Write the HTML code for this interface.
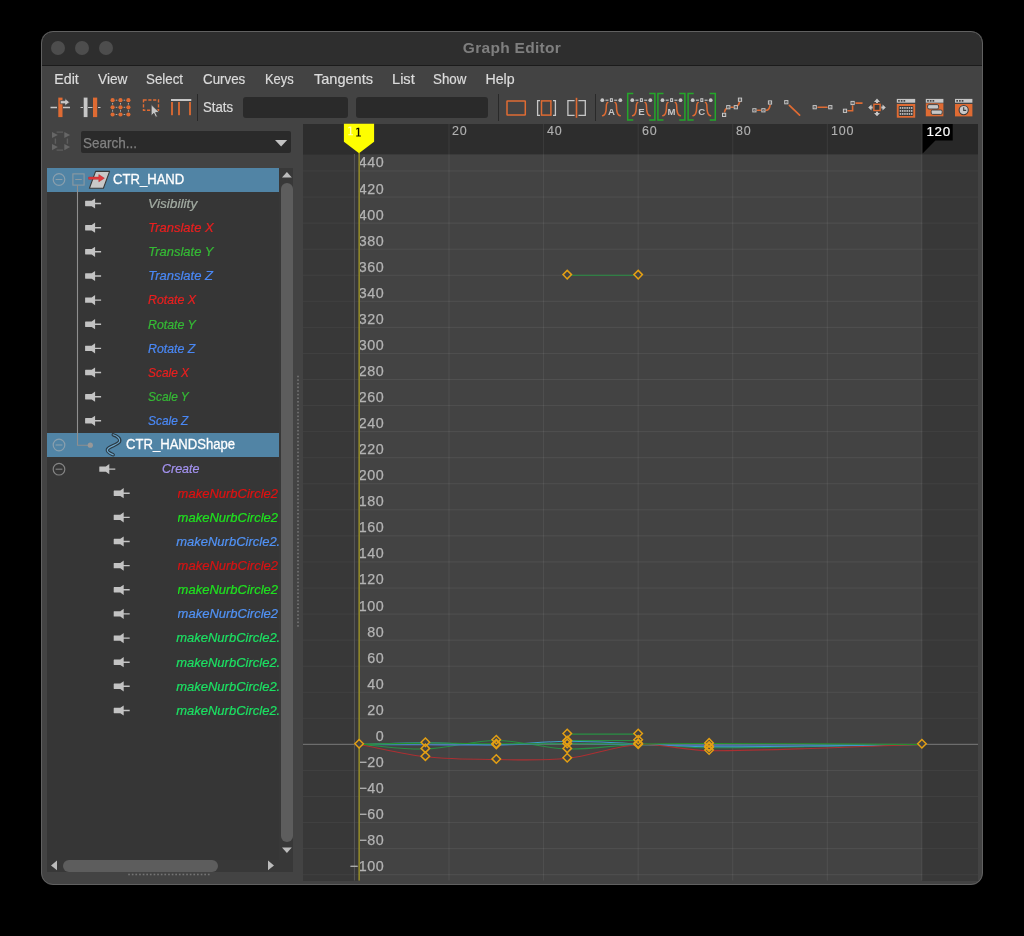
<!DOCTYPE html><html><head><meta charset="utf-8"><title>Graph Editor</title><style>

html,body{margin:0;padding:0;background:#000;}
body{width:1024px;height:936px;position:relative;overflow:hidden;font-family:"Liberation Sans",sans-serif;}
.a{position:absolute;}
#win{will-change:transform;opacity:.9999;position:absolute;left:41px;top:31px;width:942px;height:854px;background:#444;border-radius:12px;overflow:hidden;}
#rim{position:absolute;left:0;top:0;width:940px;height:852px;border:1px solid #626262;border-radius:12px;pointer-events:none;}
#tb{position:absolute;left:0;top:0;width:942px;height:34px;background:#2f2f2f;border-bottom:1px solid #1c1c1c;}
.tl{position:absolute;top:10px;width:14px;height:14px;border-radius:7px;background:#4e4e4e;}
#title{position:absolute;left:0;top:0;width:942px;height:34px;line-height:33px;text-align:center;color:#808080;font-weight:bold;font-size:15.5px;letter-spacing:.3px;}
.mi{position:absolute;top:38px;height:20px;line-height:20px;color:#dcdcdc;font-size:14.2px;white-space:nowrap;transform:scaleX(.94);transform-origin:0 50%;-webkit-text-stroke:.2px #dcdcdc;}
.fld{position:absolute;background:#2b2b2b;border-radius:2px;}
.sep{position:absolute;width:1px;background:#2a2a2a;}
svg{position:absolute;left:0;top:0;overflow:visible}
.row{position:absolute;left:6px;width:232px;height:24px;}
.rt{position:absolute;white-space:nowrap;font-style:italic;font-size:13px;-webkit-text-stroke:.22px currentColor;line-height:24px;height:24px;}
.nt{position:absolute;white-space:nowrap;font-size:14.6px;transform:scaleX(.897);transform-origin:0 50%;-webkit-text-stroke:.3px #fff;line-height:24px;height:24px;color:#fff;}

</style></head><body>
<div id="win">
<div id="tb"></div>
<div class="tl" style="left:10px"></div>
<div class="tl" style="left:34px"></div>
<div class="tl" style="left:58px"></div>
<div id="title">Graph Editor</div>
<div class="mi" style="left:13.3px;transform:scaleX(1.0)">Edit</div>
<div class="mi" style="left:56.6px;transform:scaleX(0.965)">View</div>
<div class="mi" style="left:105.0px;transform:scaleX(0.94)">Select</div>
<div class="mi" style="left:162.0px;transform:scaleX(0.94)">Curves</div>
<div class="mi" style="left:224.4px;transform:scaleX(0.91)">Keys</div>
<div class="mi" style="left:272.6px;transform:scaleX(1.025)">Tangents</div>
<div class="mi" style="left:351.0px;transform:scaleX(1.03)">List</div>
<div class="mi" style="left:392.0px;transform:scaleX(0.94)">Show</div>
<div class="mi" style="left:444.4px;transform:scaleX(1.0)">Help</div>
<div class="mi" style="left:162px;top:66px;font-size:14px">Stats</div>
<div class="fld" style="left:201.5px;top:66px;width:105.5px;height:20.5px;border-radius:3px"></div>
<div class="fld" style="left:315px;top:66px;width:132px;height:20.5px;border-radius:3px"></div>
<div class="sep" style="left:156px;top:63px;height:27px"></div>
<div class="sep" style="left:457px;top:63px;height:27px"></div>
<div class="sep" style="left:554px;top:63px;height:27px"></div>
<svg width="942" height="854" viewBox="41 31 942 854"><path d="M50.5 107.5H57M63 107.5H70" stroke="#c8c8c8" stroke-width="1.4"/><rect x="58.3" y="97.6" width="4.2" height="19.5" fill="#e06c34"/><path d="M60.3 100.6h4.7v-2l4.6 3.6-4.6 3.6v-2h-4.7z" fill="#c8c8c8" stroke="#4a4a4a" stroke-width=".8"/><path d="M80.5 107.5H83M88 107.5H92.5M98 107.5H100.5" stroke="#c8c8c8" stroke-width="1.2"/><rect x="83.7" y="97.6" width="3.8" height="19.5" fill="#c8c8c8"/><rect x="93" y="97.6" width="4.2" height="19.5" fill="#e06c34"/><circle cx="112.6" cy="100.2" r="2.1" fill="#e06c34"/><circle cx="120.5" cy="100.2" r="2.1" fill="#e06c34"/><circle cx="128.4" cy="100.2" r="2.1" fill="#e06c34"/><circle cx="112.6" cy="107.3" r="2.1" fill="#e06c34"/><circle cx="120.5" cy="107.3" r="2.1" fill="#e06c34"/><circle cx="128.4" cy="107.3" r="2.1" fill="#e06c34"/><circle cx="112.6" cy="114.5" r="2.1" fill="#e06c34"/><circle cx="120.5" cy="114.5" r="2.1" fill="#e06c34"/><circle cx="128.4" cy="114.5" r="2.1" fill="#e06c34"/><rect x="115.7" y="99.7" width="1.6" height="1" fill="#aaa"/><rect x="123.60000000000001" y="99.7" width="1.6" height="1" fill="#aaa"/><rect x="115.7" y="106.8" width="1.6" height="1" fill="#aaa"/><rect x="123.60000000000001" y="106.8" width="1.6" height="1" fill="#aaa"/><rect x="115.7" y="114.0" width="1.6" height="1" fill="#aaa"/><rect x="123.60000000000001" y="114.0" width="1.6" height="1" fill="#aaa"/><rect x="112.1" y="103.0" width="1" height="1.6" fill="#aaa"/><rect x="112.1" y="110.10000000000001" width="1" height="1.6" fill="#aaa"/><rect x="120.0" y="103.0" width="1" height="1.6" fill="#aaa"/><rect x="120.0" y="110.10000000000001" width="1" height="1.6" fill="#aaa"/><rect x="127.9" y="103.0" width="1" height="1.6" fill="#aaa"/><rect x="127.9" y="110.10000000000001" width="1" height="1.6" fill="#aaa"/><rect x="143.5" y="100" width="15" height="10.3" fill="none" stroke="#e06c34" stroke-width="1.4" stroke-dasharray="3.2 1.6"/><path d="M151.2 104.6v11.2l2.7-2.5 1.8 3.9 1.7-.8-1.8-3.8 3.6-.3z" fill="#c8c8c8" stroke="#444" stroke-width=".8"/><rect x="171" y="99" width="20.3" height="2" fill="#c8c8c8"/><rect x="171.1" y="102" width="1.8" height="13.2" fill="#e06c34"/><rect x="178.1" y="102" width="1.8" height="13.2" fill="#e06c34"/><rect x="189.1" y="102" width="1.8" height="13.2" fill="#e06c34"/></svg>
<svg width="942" height="854" viewBox="41 31 942 854"><rect x="507" y="100.9" width="18.3" height="14.2" rx=".4" fill="none" stroke="#e06c34" stroke-width="1.5"/><path d="M540 100.7H537.6V115.3H540M553 100.7H555.4V115.3H553" fill="none" stroke="#c8c8c8" stroke-width="1.3"/><rect x="541.5" y="100.9" width="9.4" height="14.2" fill="none" stroke="#e06c34" stroke-width="1.5"/><path d="M574.6 100.7H567.9V115.3H574.6M578.4 100.7H585.3V115.3H578.4" fill="none" stroke="#c8c8c8" stroke-width="1.3"/><rect x="575.7" y="97.8" width="1.6" height="20" fill="#e06c34"/><rect x="605.5" y="99.6" width="3" height="1.3" fill="#b4b4b4"/><rect x="614.2" y="99.6" width="3" height="1.3" fill="#b4b4b4"/><circle cx="602.3" cy="100.2" r="1.9" fill="#c8c8c8"/><circle cx="620.3" cy="100.2" r="1.9" fill="#c8c8c8"/><rect x="610.4" y="98.7" width="2" height="2.8" fill="#555" stroke="#c8c8c8" stroke-width="1"/><path d="M602.6 115.7C604.7 115.3 605.6 113.4 606.0 110.6S606.2 105.6 606.5 104.4S607.0 102.7 607.8 102.4" fill="none" stroke="#e06c34" stroke-width="1.5" stroke-linecap="round"/><path d="M620.2 115.7C618.1 115.3 617.2 113.4 616.8 110.6S616.6 105.6 616.3 104.4S615.8 102.7 615.0 102.4" fill="none" stroke="#e06c34" stroke-width="1.5" stroke-linecap="round"/><text x="611.4" y="115.4" text-anchor="middle" font-family="Liberation Sans,sans-serif" font-weight="bold" font-size="9.6" fill="#c8c8c8">A</text><rect x="635.5" y="99.6" width="3" height="1.3" fill="#b4b4b4"/><rect x="644.2" y="99.6" width="3" height="1.3" fill="#b4b4b4"/><circle cx="632.3" cy="100.2" r="1.9" fill="#c8c8c8"/><circle cx="650.3" cy="100.2" r="1.9" fill="#c8c8c8"/><rect x="640.4" y="98.7" width="2" height="2.8" fill="#555" stroke="#c8c8c8" stroke-width="1"/><path d="M632.6 115.7C634.7 115.3 635.6 113.4 636.0 110.6S636.2 105.6 636.5 104.4S637.0 102.7 637.8 102.4" fill="none" stroke="#e06c34" stroke-width="1.5" stroke-linecap="round"/><path d="M650.2 115.7C648.1 115.3 647.2 113.4 646.8 110.6S646.6 105.6 646.3 104.4S645.8 102.7 645.0 102.4" fill="none" stroke="#e06c34" stroke-width="1.5" stroke-linecap="round"/><text x="641.4" y="115.4" text-anchor="middle" font-family="Liberation Sans,sans-serif" font-weight="bold" font-size="9.6" fill="#c8c8c8">E</text><path d="M633.3 93.5H627.7V120.1H633.3M649.3000000000001 93.5H654.9V120.1H649.3000000000001" fill="none" stroke="#25a82b" stroke-width="1.5"/><rect x="665.7" y="99.6" width="3" height="1.3" fill="#b4b4b4"/><rect x="674.4" y="99.6" width="3" height="1.3" fill="#b4b4b4"/><circle cx="662.5" cy="100.2" r="1.9" fill="#c8c8c8"/><circle cx="680.5" cy="100.2" r="1.9" fill="#c8c8c8"/><rect x="670.6" y="98.7" width="2" height="2.8" fill="#555" stroke="#c8c8c8" stroke-width="1"/><path d="M662.8 115.7C664.9 115.3 665.8 113.4 666.2 110.6S666.4 105.6 666.7 104.4S667.2 102.7 668.0 102.4" fill="none" stroke="#e06c34" stroke-width="1.5" stroke-linecap="round"/><path d="M680.4 115.7C678.3 115.3 677.4 113.4 677.0 110.6S676.8 105.6 676.5 104.4S676.0 102.7 675.2 102.4" fill="none" stroke="#e06c34" stroke-width="1.5" stroke-linecap="round"/><text x="671.6" y="115.4" text-anchor="middle" font-family="Liberation Sans,sans-serif" font-weight="bold" font-size="9.6" fill="#c8c8c8">M</text><path d="M663.5 93.5H657.9000000000001V120.1H663.5M679.3000000000001 93.5H684.9V120.1H679.3000000000001" fill="none" stroke="#25a82b" stroke-width="1.5"/><rect x="695.9" y="99.6" width="3" height="1.3" fill="#b4b4b4"/><rect x="704.6" y="99.6" width="3" height="1.3" fill="#b4b4b4"/><circle cx="692.7" cy="100.2" r="1.9" fill="#c8c8c8"/><circle cx="710.7" cy="100.2" r="1.9" fill="#c8c8c8"/><rect x="700.8" y="98.7" width="2" height="2.8" fill="#555" stroke="#c8c8c8" stroke-width="1"/><path d="M693.0 115.7C695.1 115.3 696.0 113.4 696.4 110.6S696.6 105.6 696.9 104.4S697.4 102.7 698.2 102.4" fill="none" stroke="#e06c34" stroke-width="1.5" stroke-linecap="round"/><path d="M710.6 115.7C708.5 115.3 707.6 113.4 707.2 110.6S707.0 105.6 706.7 104.4S706.2 102.7 705.4 102.4" fill="none" stroke="#e06c34" stroke-width="1.5" stroke-linecap="round"/><text x="701.8000000000001" y="115.4" text-anchor="middle" font-family="Liberation Sans,sans-serif" font-weight="bold" font-size="9.6" fill="#c8c8c8">C</text><path d="M693.6999999999999 93.5H688.1V120.1H693.6999999999999M709.7 93.5H715.3V120.1H709.7" fill="none" stroke="#25a82b" stroke-width="1.5"/><path d="M724.6 111.8q.4-2 1.6-3.2M731 107.3h2.2M737.8 105.6q1.2-1.6 1.7-3.4" fill="none" stroke="#e06c34" stroke-width="1.6" stroke-linecap="round"/><rect x="722.5" y="113.3" width="3.2" height="3.2" fill="#444" stroke="#c8c8c8" stroke-width="1"/><rect x="723.6" y="114.4" width="1" height="1" fill="#999"/><rect x="726.7" y="105.6" width="3.2" height="3.2" fill="#444" stroke="#c8c8c8" stroke-width="1"/><rect x="727.8" y="106.7" width="1" height="1" fill="#999"/><rect x="734.2" y="105.6" width="3.2" height="3.2" fill="#444" stroke="#c8c8c8" stroke-width="1"/><rect x="735.3" y="106.7" width="1" height="1" fill="#999"/><rect x="738.4" y="98.1" width="3.2" height="3.2" fill="#444" stroke="#c8c8c8" stroke-width="1"/><rect x="739.5" y="99.2" width="1" height="1" fill="#999"/><path d="M757.4 110.3h3M766.2 110.3q3.2-.3 3.8-5" fill="none" stroke="#e06c34" stroke-width="1.6" stroke-linecap="round"/><rect x="752.8" y="108.7" width="3.2" height="3.2" fill="#444" stroke="#c8c8c8" stroke-width="1"/><rect x="753.9" y="109.8" width="1" height="1" fill="#999"/><rect x="761.8" y="108.7" width="3.2" height="3.2" fill="#444" stroke="#c8c8c8" stroke-width="1"/><rect x="762.9" y="109.8" width="1" height="1" fill="#999"/><rect x="768.4" y="100.9" width="3.2" height="3.2" fill="#444" stroke="#c8c8c8" stroke-width="1"/><rect x="769.5" y="102.0" width="1" height="1" fill="#999"/><path d="M789.4 105.3L799.6 115.2" fill="none" stroke="#e06c34" stroke-width="1.7" stroke-linecap="round"/><rect x="784.7" y="100.6" width="3.2" height="3.2" fill="#444" stroke="#c8c8c8" stroke-width="1"/><rect x="785.8" y="101.7" width="1" height="1" fill="#999"/><path d="M818 107.3H827" fill="none" stroke="#e06c34" stroke-width="1.6" stroke-linecap="round"/><rect x="813.1" y="105.6" width="3.2" height="3.2" fill="#444" stroke="#c8c8c8" stroke-width="1"/><rect x="814.2" y="106.7" width="1" height="1" fill="#999"/><rect x="828.7" y="105.6" width="3.2" height="3.2" fill="#444" stroke="#c8c8c8" stroke-width="1"/><rect x="829.8" y="106.7" width="1" height="1" fill="#999"/><path d="M848 110.8H852.6V106M856 103.1H862" fill="none" stroke="#e06c34" stroke-width="1.6" stroke-linecap="round"/><rect x="843.4" y="109.2" width="3.2" height="3.2" fill="#444" stroke="#c8c8c8" stroke-width="1"/><rect x="844.5" y="110.3" width="1" height="1" fill="#999"/><rect x="851.0" y="101.4" width="3.2" height="3.2" fill="#444" stroke="#c8c8c8" stroke-width="1"/><rect x="852.1" y="102.5" width="1" height="1" fill="#999"/><rect x="873.9" y="104.3" width="6.2" height="6.2" fill="#3a3a3a" stroke="#e06c34" stroke-width="1.4"/><path d="M877 98.6l3 3.3h-2v1.2h-2v-1.2h-2zM877 116.2l3-3.3h-2v-1.2h-2v1.2h-2zM868.2 107.4l3.3-3v2h1.2v2h-1.2v2zM885.8 107.4l-3.3-3v2h-1.2v2h1.2v2z" fill="#c8c8c8"/><rect x="896.8" y="98.9" width="18.4" height="3.8" fill="#c8c8c8"/><rect x="898.0999999999999" y="100" width="1.7" height="1.7" fill="#444"/><rect x="900.8" y="100" width="1.7" height="1.7" fill="#444"/><rect x="903.4999999999999" y="100" width="1.7" height="1.7" fill="#444"/><rect x="896.8" y="104" width="18.4" height="13.7" fill="#e06c34"/><rect x="898.7" y="106" width="14.6" height="10" rx="1" fill="#3c3c3c"/><rect x="899.7" y="107" width="1.5" height="1.9" fill="#b8b8b8"/><rect x="901.95" y="107" width="1.5" height="1.9" fill="#b8b8b8"/><rect x="904.2" y="107" width="1.5" height="1.9" fill="#b8b8b8"/><rect x="906.45" y="107" width="1.5" height="1.9" fill="#b8b8b8"/><rect x="908.7" y="107" width="1.5" height="1.9" fill="#b8b8b8"/><rect x="910.95" y="107" width="1.5" height="1.9" fill="#b8b8b8"/><rect x="899.7" y="110" width="1.5" height="1.9" fill="#b8b8b8"/><rect x="901.95" y="110" width="1.5" height="1.9" fill="#b8b8b8"/><rect x="904.2" y="110" width="1.5" height="1.9" fill="#b8b8b8"/><rect x="906.45" y="110" width="1.5" height="1.9" fill="#b8b8b8"/><rect x="908.7" y="110" width="1.5" height="1.9" fill="#b8b8b8"/><rect x="910.95" y="110" width="1.5" height="1.9" fill="#b8b8b8"/><rect x="899.7" y="113" width="1.5" height="1.9" fill="#b8b8b8"/><rect x="901.95" y="113" width="1.5" height="1.9" fill="#b8b8b8"/><rect x="904.2" y="113" width="1.5" height="1.9" fill="#b8b8b8"/><rect x="906.45" y="113" width="1.5" height="1.9" fill="#b8b8b8"/><rect x="908.7" y="113" width="1.5" height="1.9" fill="#b8b8b8"/><rect x="910.95" y="113" width="1.5" height="1.9" fill="#b8b8b8"/><rect x="925.8" y="98.9" width="17.6" height="3.8" fill="#c8c8c8"/><rect x="927.0999999999999" y="100" width="1.7" height="1.7" fill="#444"/><rect x="929.8" y="100" width="1.7" height="1.7" fill="#444"/><rect x="932.4999999999999" y="100" width="1.7" height="1.7" fill="#444"/><rect x="925.8" y="103.3" width="17.6" height="13" fill="#e06c34"/><rect x="927.6" y="104.6" width="11" height="4.4" rx="1.4" fill="#c8c8c8" stroke="#3c3c3c" stroke-width=".9"/><rect x="931.2" y="110" width="11" height="4.4" rx="1.4" fill="#c8c8c8" stroke="#3c3c3c" stroke-width=".9"/><rect x="955" y="98.9" width="17.4" height="3.8" fill="#c8c8c8"/><rect x="956.3" y="100" width="1.7" height="1.7" fill="#444"/><rect x="959.0" y="100" width="1.7" height="1.7" fill="#444"/><rect x="961.6999999999999" y="100" width="1.7" height="1.7" fill="#444"/><rect x="955" y="104" width="17.4" height="12.4" fill="#e06c34"/><circle cx="963.7" cy="110.1" r="4.6" fill="#c8c8c8" stroke="#3c3c3c" stroke-width="1.1"/><path d="M963.7 107.2V110.4H966.2" fill="none" stroke="#3c3c3c" stroke-width="1.1"/></svg>
<div class="fld" style="left:40px;top:100px;width:210px;height:21.5px;border-radius:2px"></div><div class="a" style="left:42.2px;top:100.7px;height:22px;line-height:22px;font-size:14.2px;transform:scaleX(.95);transform-origin:0 50%;-webkit-text-stroke:.25px #828282;color:#828282">Search...</div><div class="a" style="left:6px;top:136.6px;width:246px;height:704.2px;background:#373737"></div><div class="a" style="left:238px;top:136.6px;width:14px;height:692.0px;background:#393939"></div><div class="a" style="left:240px;top:152px;width:12px;height:659px;background:#5e5e5e;border-radius:6px"></div><div class="a" style="left:6px;top:828.6px;width:246px;height:12.2px;background:#393939"></div><div class="a" style="left:21.6px;top:828.8px;width:155px;height:12px;background:#5e5e5e;border-radius:6px"></div><div class="a" style="left:6px;top:136.6px;width:232px;height:24.2px;background:#5285a6"></div><div class="a" style="left:6px;top:402.1px;width:232px;height:24.2px;background:#5285a6"></div><div class="nt" style="left:71.8px;top:135.8px">CTR_HAND</div><div class="rt" style="left:107.4px;top:160.8px;color:#a3aca3;transform:scaleX(1.055);transform-origin:0 50%">Visibility</div><div class="rt" style="left:107.2px;top:185.0px;color:#ea2020;transform:scaleX(1.0);transform-origin:0 50%">Translate X</div><div class="rt" style="left:107.2px;top:209.1px;color:#36bb36;transform:scaleX(1.0);transform-origin:0 50%">Translate Y</div><div class="rt" style="left:107.2px;top:233.3px;color:#4b89f6;transform:scaleX(1.0);transform-origin:0 50%">Translate Z</div><div class="rt" style="left:107.2px;top:257.4px;color:#ea2020;transform:scaleX(0.95);transform-origin:0 50%">Rotate X</div><div class="rt" style="left:107.2px;top:281.5px;color:#36bb36;transform:scaleX(0.95);transform-origin:0 50%">Rotate Y</div><div class="rt" style="left:107.2px;top:305.7px;color:#4b89f6;transform:scaleX(0.95);transform-origin:0 50%">Rotate Z</div><div class="rt" style="left:107.2px;top:329.8px;color:#ea2020;transform:scaleX(0.915);transform-origin:0 50%">Scale X</div><div class="rt" style="left:107.2px;top:354.0px;color:#36bb36;transform:scaleX(0.915);transform-origin:0 50%">Scale Y</div><div class="rt" style="left:107.2px;top:378.1px;color:#4b89f6;transform:scaleX(0.915);transform-origin:0 50%">Scale Z</div><div class="nt" style="left:85.3px;top:401.3px">CTR_HANDShape</div><div class="rt" style="left:120.8px;top:426.4px;color:#a594f2;transform:scaleX(.96);transform-origin:0 50%">Create</div><div class="rt" style="left:136.6px;top:450.5px;color:#e01212;width:101.4px;overflow:hidden">makeNurbCircle2</div><div class="rt" style="left:136.6px;top:474.7px;color:#20e220;width:101.4px;overflow:hidden">makeNurbCircle2</div><div class="rt" style="left:135.2px;top:498.8px;color:#5293f6;width:102.8px;overflow:hidden">makeNurbCircle2.</div><div class="rt" style="left:136.6px;top:522.9px;color:#d81414;width:101.4px;overflow:hidden">makeNurbCircle2</div><div class="rt" style="left:136.6px;top:547.1px;color:#20e220;width:101.4px;overflow:hidden">makeNurbCircle2</div><div class="rt" style="left:136.6px;top:571.2px;color:#5293f6;width:101.4px;overflow:hidden">makeNurbCircle2</div><div class="rt" style="left:135.2px;top:595.4px;color:#1de264;width:102.8px;overflow:hidden">makeNurbCircle2.</div><div class="rt" style="left:135.2px;top:619.5px;color:#1de264;width:102.8px;overflow:hidden">makeNurbCircle2.</div><div class="rt" style="left:135.2px;top:643.6px;color:#1de264;width:102.8px;overflow:hidden">makeNurbCircle2.</div><div class="rt" style="left:135.2px;top:667.8px;color:#1de264;width:102.8px;overflow:hidden">makeNurbCircle2.</div><svg width="942" height="854" viewBox="41 31 942 854"><path d="M52 131.9l5.9 3.1-5.9 3.1zM52 144l5.9 3.1-5.9 3.1zM64.3 131.9l5.8 3.1-5.8 3.1zM64.3 144l5.8 3.1-5.8 3.1z" fill="#676767"/><path d="M56.6 132.1H63M56.6 150.1H63M55.4 138.4V143.7M67.4 138.4V143.7" stroke="#5e5e5e" stroke-width="1.4" fill="none"/><path d="M275 140H287.2L281.1 146.5z" fill="#c4c4c4"/><path d="M282 177.4H291.8L286.9 172z" fill="#bdbdbd"/><path d="M282 847.4H291.8L286.9 853z" fill="#bdbdbd"/><path d="M57 860.6V870.2L51 865.4z" fill="#bdbdbd"/><path d="M268 860.6V870.2L274 865.4z" fill="#bdbdbd"/><circle cx="59" cy="179.5" r="5.8" fill="none" stroke="#8ba0ae" stroke-width="1.2"/><path d="M55.6 179.5H62.4" stroke="#8ba0ae" stroke-width="1.1"/><circle cx="59" cy="445.0" r="5.8" fill="none" stroke="#8ba0ae" stroke-width="1.2"/><path d="M55.6 445.0H62.4" stroke="#8ba0ae" stroke-width="1.1"/><circle cx="59" cy="469.2" r="5.8" fill="none" stroke="#858585" stroke-width="1.2"/><path d="M55.6 469.2H62.4" stroke="#858585" stroke-width="1.1"/><rect x="72.9" y="173.9" width="11.2" height="11.2" fill="none" stroke="#8d9aa3" stroke-width="1.1"/><path d="M75.2 179.5H81.8" stroke="#8d9aa3" stroke-width="1.1"/><path d="M77.5 185.1V445.2H88.5" fill="none" stroke="#909090" stroke-width="1.1"/><circle cx="90.3" cy="445.2" r="2.6" fill="#999"/><path d="M95.6 171.4H109.6L103.4 188.2H89.4z" fill="#c9c9c9" stroke="#3a3a3a" stroke-width="1.1" stroke-linejoin="round"/><path d="M88.6 177.1H98.8V174.6L104.4 178.2 98.8 181.8V179.3H88.6z" fill="#e23a3e" stroke="#b8282c" stroke-width=".5"/><path d="M113.2 434.8C117 436 120.6 438.6 119.6 441.4C118.4 444.8 108.4 446.4 107.4 449.6C106.6 452.2 110.6 453.6 113.2 454.8" fill="none" stroke="#2b3942" stroke-width="3.4" stroke-linecap="round"/><path d="M113.2 434.8C117 436 120.6 438.6 119.6 441.4C118.4 444.8 108.4 446.4 107.4 449.6C106.6 452.2 110.6 453.6 113.2 454.8" fill="none" stroke="#6fa9cd" stroke-width="1.2" stroke-linecap="round"/><path d="M85.5 200.8H91.7L95.1 198.4V202.8H101.1V204.2H95.1V208.6L91.7 206.2H85.5Q85.1 206.2 85.1 205.8V201.2Q85.1 200.8 85.5 200.8z" fill="#c4c4c4"/><path d="M85.5 225.0H91.7L95.1 222.6V227.0H101.1V228.4H95.1V232.8L91.7 230.4H85.5Q85.1 230.4 85.1 230.0V225.4Q85.1 225.0 85.5 225.0z" fill="#c4c4c4"/><path d="M85.5 249.1H91.7L95.1 246.7V251.1H101.1V252.5H95.1V256.9L91.7 254.5H85.5Q85.1 254.5 85.1 254.1V249.5Q85.1 249.1 85.5 249.1z" fill="#c4c4c4"/><path d="M85.5 273.3H91.7L95.1 270.9V275.3H101.1V276.7H95.1V281.1L91.7 278.7H85.5Q85.1 278.7 85.1 278.3V273.7Q85.1 273.3 85.5 273.3z" fill="#c4c4c4"/><path d="M85.5 297.4H91.7L95.1 295.0V299.4H101.1V300.8H95.1V305.2L91.7 302.8H85.5Q85.1 302.8 85.1 302.4V297.8Q85.1 297.4 85.5 297.4z" fill="#c4c4c4"/><path d="M85.5 321.5H91.7L95.1 319.1V323.5H101.1V324.9H95.1V329.3L91.7 326.9H85.5Q85.1 326.9 85.1 326.5V321.9Q85.1 321.5 85.5 321.5z" fill="#c4c4c4"/><path d="M85.5 345.7H91.7L95.1 343.3V347.7H101.1V349.1H95.1V353.5L91.7 351.1H85.5Q85.1 351.1 85.1 350.7V346.1Q85.1 345.7 85.5 345.7z" fill="#c4c4c4"/><path d="M85.5 369.8H91.7L95.1 367.4V371.8H101.1V373.2H95.1V377.6L91.7 375.2H85.5Q85.1 375.2 85.1 374.8V370.2Q85.1 369.8 85.5 369.8z" fill="#c4c4c4"/><path d="M85.5 394.0H91.7L95.1 391.6V396.0H101.1V397.4H95.1V401.8L91.7 399.4H85.5Q85.1 399.4 85.1 399.0V394.4Q85.1 394.0 85.5 394.0z" fill="#c4c4c4"/><path d="M85.5 418.1H91.7L95.1 415.7V420.1H101.1V421.5H95.1V425.9L91.7 423.5H85.5Q85.1 423.5 85.1 423.1V418.5Q85.1 418.1 85.5 418.1z" fill="#c4c4c4"/><path d="M99.7 466.4H105.9L109.3 464.0V468.4H115.3V469.8H109.3V474.2L105.9 471.8H99.7Q99.3 471.8 99.3 471.4V466.8Q99.3 466.4 99.7 466.4z" fill="#c4c4c4"/><path d="M114.1 490.5H120.3L123.7 488.1V492.5H129.7V493.9H123.7V498.3L120.3 495.9H114.1Q113.7 495.9 113.7 495.5V490.9Q113.7 490.5 114.1 490.5z" fill="#c4c4c4"/><path d="M114.1 514.7H120.3L123.7 512.3V516.7H129.7V518.1H123.7V522.5L120.3 520.1H114.1Q113.7 520.1 113.7 519.7V515.1Q113.7 514.7 114.1 514.7z" fill="#c4c4c4"/><path d="M114.1 538.8H120.3L123.7 536.4V540.8H129.7V542.2H123.7V546.6L120.3 544.2H114.1Q113.7 544.2 113.7 543.8V539.2Q113.7 538.8 114.1 538.8z" fill="#c4c4c4"/><path d="M114.1 562.9H120.3L123.7 560.5V564.9H129.7V566.3H123.7V570.7L120.3 568.3H114.1Q113.7 568.3 113.7 567.9V563.3Q113.7 562.9 114.1 562.9z" fill="#c4c4c4"/><path d="M114.1 587.1H120.3L123.7 584.7V589.1H129.7V590.5H123.7V594.9L120.3 592.5H114.1Q113.7 592.5 113.7 592.1V587.5Q113.7 587.1 114.1 587.1z" fill="#c4c4c4"/><path d="M114.1 611.2H120.3L123.7 608.8V613.2H129.7V614.6H123.7V619.0L120.3 616.6H114.1Q113.7 616.6 113.7 616.2V611.6Q113.7 611.2 114.1 611.2z" fill="#c4c4c4"/><path d="M114.1 635.4H120.3L123.7 633.0V637.4H129.7V638.8H123.7V643.2L120.3 640.8H114.1Q113.7 640.8 113.7 640.4V635.8Q113.7 635.4 114.1 635.4z" fill="#c4c4c4"/><path d="M114.1 659.5H120.3L123.7 657.1V661.5H129.7V662.9H123.7V667.3L120.3 664.9H114.1Q113.7 664.9 113.7 664.5V659.9Q113.7 659.5 114.1 659.5z" fill="#c4c4c4"/><path d="M114.1 683.6H120.3L123.7 681.2V685.6H129.7V687.0H123.7V691.4L120.3 689.0H114.1Q113.7 689.0 113.7 688.6V684.0Q113.7 683.6 114.1 683.6z" fill="#c4c4c4"/><path d="M114.1 707.8H120.3L123.7 705.4V709.8H129.7V711.2H123.7V715.6L120.3 713.2H114.1Q113.7 713.2 113.7 712.8V708.2Q113.7 707.8 114.1 707.8z" fill="#c4c4c4"/><rect x="297" y="375.7" width="2" height="1.6" fill="#6c6c6c"/><rect x="297" y="379.3" width="2" height="1.6" fill="#6c6c6c"/><rect x="297" y="382.9" width="2" height="1.6" fill="#6c6c6c"/><rect x="297" y="386.5" width="2" height="1.6" fill="#6c6c6c"/><rect x="297" y="390.2" width="2" height="1.6" fill="#6c6c6c"/><rect x="297" y="393.8" width="2" height="1.6" fill="#6c6c6c"/><rect x="297" y="397.4" width="2" height="1.6" fill="#6c6c6c"/><rect x="297" y="401.0" width="2" height="1.6" fill="#6c6c6c"/><rect x="297" y="404.6" width="2" height="1.6" fill="#6c6c6c"/><rect x="297" y="408.2" width="2" height="1.6" fill="#6c6c6c"/><rect x="297" y="411.8" width="2" height="1.6" fill="#6c6c6c"/><rect x="297" y="415.5" width="2" height="1.6" fill="#6c6c6c"/><rect x="297" y="419.1" width="2" height="1.6" fill="#6c6c6c"/><rect x="297" y="422.7" width="2" height="1.6" fill="#6c6c6c"/><rect x="297" y="426.3" width="2" height="1.6" fill="#6c6c6c"/><rect x="297" y="429.9" width="2" height="1.6" fill="#6c6c6c"/><rect x="297" y="433.5" width="2" height="1.6" fill="#6c6c6c"/><rect x="297" y="437.1" width="2" height="1.6" fill="#6c6c6c"/><rect x="297" y="440.8" width="2" height="1.6" fill="#6c6c6c"/><rect x="297" y="444.4" width="2" height="1.6" fill="#6c6c6c"/><rect x="297" y="448.0" width="2" height="1.6" fill="#6c6c6c"/><rect x="297" y="451.6" width="2" height="1.6" fill="#6c6c6c"/><rect x="297" y="455.2" width="2" height="1.6" fill="#6c6c6c"/><rect x="297" y="458.8" width="2" height="1.6" fill="#6c6c6c"/><rect x="297" y="462.4" width="2" height="1.6" fill="#6c6c6c"/><rect x="297" y="466.0" width="2" height="1.6" fill="#6c6c6c"/><rect x="297" y="469.7" width="2" height="1.6" fill="#6c6c6c"/><rect x="297" y="473.3" width="2" height="1.6" fill="#6c6c6c"/><rect x="297" y="476.9" width="2" height="1.6" fill="#6c6c6c"/><rect x="297" y="480.5" width="2" height="1.6" fill="#6c6c6c"/><rect x="297" y="484.1" width="2" height="1.6" fill="#6c6c6c"/><rect x="297" y="487.7" width="2" height="1.6" fill="#6c6c6c"/><rect x="297" y="491.3" width="2" height="1.6" fill="#6c6c6c"/><rect x="297" y="495.0" width="2" height="1.6" fill="#6c6c6c"/><rect x="297" y="498.6" width="2" height="1.6" fill="#6c6c6c"/><rect x="297" y="502.2" width="2" height="1.6" fill="#6c6c6c"/><rect x="297" y="505.8" width="2" height="1.6" fill="#6c6c6c"/><rect x="297" y="509.4" width="2" height="1.6" fill="#6c6c6c"/><rect x="297" y="513.0" width="2" height="1.6" fill="#6c6c6c"/><rect x="297" y="516.6" width="2" height="1.6" fill="#6c6c6c"/><rect x="297" y="520.3" width="2" height="1.6" fill="#6c6c6c"/><rect x="297" y="523.9" width="2" height="1.6" fill="#6c6c6c"/><rect x="297" y="527.5" width="2" height="1.6" fill="#6c6c6c"/><rect x="297" y="531.1" width="2" height="1.6" fill="#6c6c6c"/><rect x="297" y="534.7" width="2" height="1.6" fill="#6c6c6c"/><rect x="297" y="538.3" width="2" height="1.6" fill="#6c6c6c"/><rect x="297" y="541.9" width="2" height="1.6" fill="#6c6c6c"/><rect x="297" y="545.6" width="2" height="1.6" fill="#6c6c6c"/><rect x="297" y="549.2" width="2" height="1.6" fill="#6c6c6c"/><rect x="297" y="552.8" width="2" height="1.6" fill="#6c6c6c"/><rect x="297" y="556.4" width="2" height="1.6" fill="#6c6c6c"/><rect x="297" y="560.0" width="2" height="1.6" fill="#6c6c6c"/><rect x="297" y="563.6" width="2" height="1.6" fill="#6c6c6c"/><rect x="297" y="567.2" width="2" height="1.6" fill="#6c6c6c"/><rect x="297" y="570.9" width="2" height="1.6" fill="#6c6c6c"/><rect x="297" y="574.5" width="2" height="1.6" fill="#6c6c6c"/><rect x="297" y="578.1" width="2" height="1.6" fill="#6c6c6c"/><rect x="297" y="581.7" width="2" height="1.6" fill="#6c6c6c"/><rect x="297" y="585.3" width="2" height="1.6" fill="#6c6c6c"/><rect x="297" y="588.9" width="2" height="1.6" fill="#6c6c6c"/><rect x="297" y="592.5" width="2" height="1.6" fill="#6c6c6c"/><rect x="297" y="596.2" width="2" height="1.6" fill="#6c6c6c"/><rect x="297" y="599.8" width="2" height="1.6" fill="#6c6c6c"/><rect x="297" y="603.4" width="2" height="1.6" fill="#6c6c6c"/><rect x="297" y="607.0" width="2" height="1.6" fill="#6c6c6c"/><rect x="297" y="610.6" width="2" height="1.6" fill="#6c6c6c"/><rect x="297" y="614.2" width="2" height="1.6" fill="#6c6c6c"/><rect x="297" y="617.8" width="2" height="1.6" fill="#6c6c6c"/><rect x="297" y="621.5" width="2" height="1.6" fill="#6c6c6c"/><rect x="297" y="625.1" width="2" height="1.6" fill="#6c6c6c"/><rect x="128.2" y="873.7" width="1.7" height="1.6" fill="#757575"/><rect x="131.8" y="873.7" width="1.7" height="1.6" fill="#757575"/><rect x="135.4" y="873.7" width="1.7" height="1.6" fill="#757575"/><rect x="139.1" y="873.7" width="1.7" height="1.6" fill="#757575"/><rect x="142.7" y="873.7" width="1.7" height="1.6" fill="#757575"/><rect x="146.3" y="873.7" width="1.7" height="1.6" fill="#757575"/><rect x="149.9" y="873.7" width="1.7" height="1.6" fill="#757575"/><rect x="153.6" y="873.7" width="1.7" height="1.6" fill="#757575"/><rect x="157.2" y="873.7" width="1.7" height="1.6" fill="#757575"/><rect x="160.8" y="873.7" width="1.7" height="1.6" fill="#757575"/><rect x="164.4" y="873.7" width="1.7" height="1.6" fill="#757575"/><rect x="168.1" y="873.7" width="1.7" height="1.6" fill="#757575"/><rect x="171.7" y="873.7" width="1.7" height="1.6" fill="#757575"/><rect x="175.3" y="873.7" width="1.7" height="1.6" fill="#757575"/><rect x="178.9" y="873.7" width="1.7" height="1.6" fill="#757575"/><rect x="182.5" y="873.7" width="1.7" height="1.6" fill="#757575"/><rect x="186.2" y="873.7" width="1.7" height="1.6" fill="#757575"/><rect x="189.8" y="873.7" width="1.7" height="1.6" fill="#757575"/><rect x="193.4" y="873.7" width="1.7" height="1.6" fill="#757575"/><rect x="197.0" y="873.7" width="1.7" height="1.6" fill="#757575"/><rect x="200.7" y="873.7" width="1.7" height="1.6" fill="#757575"/><rect x="204.3" y="873.7" width="1.7" height="1.6" fill="#757575"/><rect x="207.9" y="873.7" width="1.7" height="1.6" fill="#757575"/></svg>
<div class="a" style="left:262px;top:93px;width:675px;height:30px;background:#2e2e2e"></div><div class="a" style="left:881.4px;top:93px;width:55.60000000000002px;height:30px;background:#292929"></div><div class="a" style="left:262px;top:123px;width:675px;height:726.5px;background:#444"></div><div class="a" style="left:262px;top:123px;width:55px;height:726.5px;background:#393939"></div><div class="a" style="left:881.4px;top:123px;width:55.60000000000002px;height:726.5px;background:#393939"></div><div class="a" style="left:262px;top:123px;width:675px;height:1px;background:rgba(0,0,0,.12)"></div><svg width="942" height="854" viewBox="41 31 942 854"><path d="M358 874.72H922.4" stroke="rgba(255,255,255,0.072)" stroke-width="1"/><path d="M303 874.72H358M922.4 874.72H978" stroke="rgba(255,255,255,0.048)" stroke-width="1"/><path d="M358 848.66H922.4" stroke="rgba(255,255,255,0.072)" stroke-width="1"/><path d="M303 848.66H358M922.4 848.66H978" stroke="rgba(255,255,255,0.048)" stroke-width="1"/><path d="M358 822.59H922.4" stroke="rgba(255,255,255,0.072)" stroke-width="1"/><path d="M303 822.59H358M922.4 822.59H978" stroke="rgba(255,255,255,0.048)" stroke-width="1"/><path d="M358 796.53H922.4" stroke="rgba(255,255,255,0.072)" stroke-width="1"/><path d="M303 796.53H358M922.4 796.53H978" stroke="rgba(255,255,255,0.048)" stroke-width="1"/><path d="M358 770.46H922.4" stroke="rgba(255,255,255,0.072)" stroke-width="1"/><path d="M303 770.46H358M922.4 770.46H978" stroke="rgba(255,255,255,0.048)" stroke-width="1"/><path d="M358 718.34H922.4" stroke="rgba(255,255,255,0.072)" stroke-width="1"/><path d="M303 718.34H358M922.4 718.34H978" stroke="rgba(255,255,255,0.048)" stroke-width="1"/><path d="M358 692.27H922.4" stroke="rgba(255,255,255,0.072)" stroke-width="1"/><path d="M303 692.27H358M922.4 692.27H978" stroke="rgba(255,255,255,0.048)" stroke-width="1"/><path d="M358 666.21H922.4" stroke="rgba(255,255,255,0.072)" stroke-width="1"/><path d="M303 666.21H358M922.4 666.21H978" stroke="rgba(255,255,255,0.048)" stroke-width="1"/><path d="M358 640.14H922.4" stroke="rgba(255,255,255,0.072)" stroke-width="1"/><path d="M303 640.14H358M922.4 640.14H978" stroke="rgba(255,255,255,0.048)" stroke-width="1"/><path d="M358 614.08H922.4" stroke="rgba(255,255,255,0.072)" stroke-width="1"/><path d="M303 614.08H358M922.4 614.08H978" stroke="rgba(255,255,255,0.048)" stroke-width="1"/><path d="M358 588.02H922.4" stroke="rgba(255,255,255,0.072)" stroke-width="1"/><path d="M303 588.02H358M922.4 588.02H978" stroke="rgba(255,255,255,0.048)" stroke-width="1"/><path d="M358 561.95H922.4" stroke="rgba(255,255,255,0.072)" stroke-width="1"/><path d="M303 561.95H358M922.4 561.95H978" stroke="rgba(255,255,255,0.048)" stroke-width="1"/><path d="M358 535.89H922.4" stroke="rgba(255,255,255,0.072)" stroke-width="1"/><path d="M303 535.89H358M922.4 535.89H978" stroke="rgba(255,255,255,0.048)" stroke-width="1"/><path d="M358 509.82H922.4" stroke="rgba(255,255,255,0.072)" stroke-width="1"/><path d="M303 509.82H358M922.4 509.82H978" stroke="rgba(255,255,255,0.048)" stroke-width="1"/><path d="M358 483.76H922.4" stroke="rgba(255,255,255,0.072)" stroke-width="1"/><path d="M303 483.76H358M922.4 483.76H978" stroke="rgba(255,255,255,0.048)" stroke-width="1"/><path d="M358 457.70H922.4" stroke="rgba(255,255,255,0.072)" stroke-width="1"/><path d="M303 457.70H358M922.4 457.70H978" stroke="rgba(255,255,255,0.048)" stroke-width="1"/><path d="M358 431.63H922.4" stroke="rgba(255,255,255,0.072)" stroke-width="1"/><path d="M303 431.63H358M922.4 431.63H978" stroke="rgba(255,255,255,0.048)" stroke-width="1"/><path d="M358 405.57H922.4" stroke="rgba(255,255,255,0.072)" stroke-width="1"/><path d="M303 405.57H358M922.4 405.57H978" stroke="rgba(255,255,255,0.048)" stroke-width="1"/><path d="M358 379.50H922.4" stroke="rgba(255,255,255,0.072)" stroke-width="1"/><path d="M303 379.50H358M922.4 379.50H978" stroke="rgba(255,255,255,0.048)" stroke-width="1"/><path d="M358 353.44H922.4" stroke="rgba(255,255,255,0.072)" stroke-width="1"/><path d="M303 353.44H358M922.4 353.44H978" stroke="rgba(255,255,255,0.048)" stroke-width="1"/><path d="M358 327.38H922.4" stroke="rgba(255,255,255,0.072)" stroke-width="1"/><path d="M303 327.38H358M922.4 327.38H978" stroke="rgba(255,255,255,0.048)" stroke-width="1"/><path d="M358 301.31H922.4" stroke="rgba(255,255,255,0.072)" stroke-width="1"/><path d="M303 301.31H358M922.4 301.31H978" stroke="rgba(255,255,255,0.048)" stroke-width="1"/><path d="M358 275.25H922.4" stroke="rgba(255,255,255,0.072)" stroke-width="1"/><path d="M303 275.25H358M922.4 275.25H978" stroke="rgba(255,255,255,0.048)" stroke-width="1"/><path d="M358 249.18H922.4" stroke="rgba(255,255,255,0.072)" stroke-width="1"/><path d="M303 249.18H358M922.4 249.18H978" stroke="rgba(255,255,255,0.048)" stroke-width="1"/><path d="M358 223.12H922.4" stroke="rgba(255,255,255,0.072)" stroke-width="1"/><path d="M303 223.12H358M922.4 223.12H978" stroke="rgba(255,255,255,0.048)" stroke-width="1"/><path d="M358 197.06H922.4" stroke="rgba(255,255,255,0.072)" stroke-width="1"/><path d="M303 197.06H358M922.4 197.06H978" stroke="rgba(255,255,255,0.048)" stroke-width="1"/><path d="M358 170.99H922.4" stroke="rgba(255,255,255,0.072)" stroke-width="1"/><path d="M303 170.99H358M922.4 170.99H978" stroke="rgba(255,255,255,0.048)" stroke-width="1"/><path d="M449.00 124V880.5" stroke="rgba(255,255,255,0.072)" stroke-width="1"/><path d="M543.58 124V880.5" stroke="rgba(255,255,255,0.072)" stroke-width="1"/><path d="M638.16 124V880.5" stroke="rgba(255,255,255,0.072)" stroke-width="1"/><path d="M732.74 124V880.5" stroke="rgba(255,255,255,0.072)" stroke-width="1"/><path d="M827.32 124V880.5" stroke="rgba(255,255,255,0.072)" stroke-width="1"/><path d="M921.90 124V880.5" stroke="rgba(255,255,255,0.072)" stroke-width="1"/><path d="M303 744.40H978" stroke="#6e6e6e" stroke-width="1.1"/><path d="M354.42 154V880.5" stroke="#5a5a5a" stroke-width="1"/></svg><div class="a" style="left:411px;top:92.2px;height:16px;line-height:16px;font-size:12.5px;letter-spacing:.85px;color:#b2b2b2;-webkit-text-stroke:.12px #b2b2b2">20</div><div class="a" style="left:506px;top:92.2px;height:16px;line-height:16px;font-size:12.5px;letter-spacing:.85px;color:#b2b2b2;-webkit-text-stroke:.12px #b2b2b2">40</div><div class="a" style="left:601px;top:92.2px;height:16px;line-height:16px;font-size:12.5px;letter-spacing:.85px;color:#b2b2b2;-webkit-text-stroke:.12px #b2b2b2">60</div><div class="a" style="left:695px;top:92.2px;height:16px;line-height:16px;font-size:12.5px;letter-spacing:.85px;color:#b2b2b2;-webkit-text-stroke:.12px #b2b2b2">80</div><div class="a" style="left:790px;top:92.2px;height:16px;line-height:16px;font-size:12.5px;letter-spacing:.85px;color:#b2b2b2;-webkit-text-stroke:.12px #b2b2b2">100</div><div class="a" style="left:279px;width:64.4px;text-align:right;top:826.1px;height:18px;line-height:18px;font-size:14.5px;letter-spacing:.6px;transform:scaleX(.985);transform-origin:100% 50%;color:#b4b4b4;-webkit-text-stroke:.25px #b4b4b4;white-space:nowrap">−100</div><div class="a" style="left:279px;width:64.4px;text-align:right;top:800.1px;height:18px;line-height:18px;font-size:14.5px;letter-spacing:.6px;transform:scaleX(.985);transform-origin:100% 50%;color:#b4b4b4;-webkit-text-stroke:.25px #b4b4b4;white-space:nowrap">−80</div><div class="a" style="left:279px;width:64.4px;text-align:right;top:774.0px;height:18px;line-height:18px;font-size:14.5px;letter-spacing:.6px;transform:scaleX(.985);transform-origin:100% 50%;color:#b4b4b4;-webkit-text-stroke:.25px #b4b4b4;white-space:nowrap">−60</div><div class="a" style="left:279px;width:64.4px;text-align:right;top:747.9px;height:18px;line-height:18px;font-size:14.5px;letter-spacing:.6px;transform:scaleX(.985);transform-origin:100% 50%;color:#b4b4b4;-webkit-text-stroke:.25px #b4b4b4;white-space:nowrap">−40</div><div class="a" style="left:279px;width:64.4px;text-align:right;top:721.9px;height:18px;line-height:18px;font-size:14.5px;letter-spacing:.6px;transform:scaleX(.985);transform-origin:100% 50%;color:#b4b4b4;-webkit-text-stroke:.25px #b4b4b4;white-space:nowrap">−20</div><div class="a" style="left:279px;width:64.4px;text-align:right;top:695.8px;height:18px;line-height:18px;font-size:14.5px;letter-spacing:.6px;transform:scaleX(.985);transform-origin:100% 50%;color:#b4b4b4;-webkit-text-stroke:.25px #b4b4b4;white-space:nowrap">0</div><div class="a" style="left:279px;width:64.4px;text-align:right;top:669.7px;height:18px;line-height:18px;font-size:14.5px;letter-spacing:.6px;transform:scaleX(.985);transform-origin:100% 50%;color:#b4b4b4;-webkit-text-stroke:.25px #b4b4b4;white-space:nowrap">20</div><div class="a" style="left:279px;width:64.4px;text-align:right;top:643.7px;height:18px;line-height:18px;font-size:14.5px;letter-spacing:.6px;transform:scaleX(.985);transform-origin:100% 50%;color:#b4b4b4;-webkit-text-stroke:.25px #b4b4b4;white-space:nowrap">40</div><div class="a" style="left:279px;width:64.4px;text-align:right;top:617.6px;height:18px;line-height:18px;font-size:14.5px;letter-spacing:.6px;transform:scaleX(.985);transform-origin:100% 50%;color:#b4b4b4;-webkit-text-stroke:.25px #b4b4b4;white-space:nowrap">60</div><div class="a" style="left:279px;width:64.4px;text-align:right;top:591.5px;height:18px;line-height:18px;font-size:14.5px;letter-spacing:.6px;transform:scaleX(.985);transform-origin:100% 50%;color:#b4b4b4;-webkit-text-stroke:.25px #b4b4b4;white-space:nowrap">80</div><div class="a" style="left:279px;width:64.4px;text-align:right;top:565.5px;height:18px;line-height:18px;font-size:14.5px;letter-spacing:.6px;transform:scaleX(.985);transform-origin:100% 50%;color:#b4b4b4;-webkit-text-stroke:.25px #b4b4b4;white-space:nowrap">100</div><div class="a" style="left:279px;width:64.4px;text-align:right;top:539.4px;height:18px;line-height:18px;font-size:14.5px;letter-spacing:.6px;transform:scaleX(.985);transform-origin:100% 50%;color:#b4b4b4;-webkit-text-stroke:.25px #b4b4b4;white-space:nowrap">120</div><div class="a" style="left:279px;width:64.4px;text-align:right;top:513.4px;height:18px;line-height:18px;font-size:14.5px;letter-spacing:.6px;transform:scaleX(.985);transform-origin:100% 50%;color:#b4b4b4;-webkit-text-stroke:.25px #b4b4b4;white-space:nowrap">140</div><div class="a" style="left:279px;width:64.4px;text-align:right;top:487.3px;height:18px;line-height:18px;font-size:14.5px;letter-spacing:.6px;transform:scaleX(.985);transform-origin:100% 50%;color:#b4b4b4;-webkit-text-stroke:.25px #b4b4b4;white-space:nowrap">160</div><div class="a" style="left:279px;width:64.4px;text-align:right;top:461.2px;height:18px;line-height:18px;font-size:14.5px;letter-spacing:.6px;transform:scaleX(.985);transform-origin:100% 50%;color:#b4b4b4;-webkit-text-stroke:.25px #b4b4b4;white-space:nowrap">180</div><div class="a" style="left:279px;width:64.4px;text-align:right;top:435.2px;height:18px;line-height:18px;font-size:14.5px;letter-spacing:.6px;transform:scaleX(.985);transform-origin:100% 50%;color:#b4b4b4;-webkit-text-stroke:.25px #b4b4b4;white-space:nowrap">200</div><div class="a" style="left:279px;width:64.4px;text-align:right;top:409.1px;height:18px;line-height:18px;font-size:14.5px;letter-spacing:.6px;transform:scaleX(.985);transform-origin:100% 50%;color:#b4b4b4;-webkit-text-stroke:.25px #b4b4b4;white-space:nowrap">220</div><div class="a" style="left:279px;width:64.4px;text-align:right;top:383.0px;height:18px;line-height:18px;font-size:14.5px;letter-spacing:.6px;transform:scaleX(.985);transform-origin:100% 50%;color:#b4b4b4;-webkit-text-stroke:.25px #b4b4b4;white-space:nowrap">240</div><div class="a" style="left:279px;width:64.4px;text-align:right;top:357.0px;height:18px;line-height:18px;font-size:14.5px;letter-spacing:.6px;transform:scaleX(.985);transform-origin:100% 50%;color:#b4b4b4;-webkit-text-stroke:.25px #b4b4b4;white-space:nowrap">260</div><div class="a" style="left:279px;width:64.4px;text-align:right;top:330.9px;height:18px;line-height:18px;font-size:14.5px;letter-spacing:.6px;transform:scaleX(.985);transform-origin:100% 50%;color:#b4b4b4;-webkit-text-stroke:.25px #b4b4b4;white-space:nowrap">280</div><div class="a" style="left:279px;width:64.4px;text-align:right;top:304.8px;height:18px;line-height:18px;font-size:14.5px;letter-spacing:.6px;transform:scaleX(.985);transform-origin:100% 50%;color:#b4b4b4;-webkit-text-stroke:.25px #b4b4b4;white-space:nowrap">300</div><div class="a" style="left:279px;width:64.4px;text-align:right;top:278.8px;height:18px;line-height:18px;font-size:14.5px;letter-spacing:.6px;transform:scaleX(.985);transform-origin:100% 50%;color:#b4b4b4;-webkit-text-stroke:.25px #b4b4b4;white-space:nowrap">320</div><div class="a" style="left:279px;width:64.4px;text-align:right;top:252.7px;height:18px;line-height:18px;font-size:14.5px;letter-spacing:.6px;transform:scaleX(.985);transform-origin:100% 50%;color:#b4b4b4;-webkit-text-stroke:.25px #b4b4b4;white-space:nowrap">340</div><div class="a" style="left:279px;width:64.4px;text-align:right;top:226.6px;height:18px;line-height:18px;font-size:14.5px;letter-spacing:.6px;transform:scaleX(.985);transform-origin:100% 50%;color:#b4b4b4;-webkit-text-stroke:.25px #b4b4b4;white-space:nowrap">360</div><div class="a" style="left:279px;width:64.4px;text-align:right;top:200.6px;height:18px;line-height:18px;font-size:14.5px;letter-spacing:.6px;transform:scaleX(.985);transform-origin:100% 50%;color:#b4b4b4;-webkit-text-stroke:.25px #b4b4b4;white-space:nowrap">380</div><div class="a" style="left:279px;width:64.4px;text-align:right;top:174.5px;height:18px;line-height:18px;font-size:14.5px;letter-spacing:.6px;transform:scaleX(.985);transform-origin:100% 50%;color:#b4b4b4;-webkit-text-stroke:.25px #b4b4b4;white-space:nowrap">400</div><div class="a" style="left:279px;width:64.4px;text-align:right;top:148.5px;height:18px;line-height:18px;font-size:14.5px;letter-spacing:.6px;transform:scaleX(.985);transform-origin:100% 50%;color:#b4b4b4;-webkit-text-stroke:.25px #b4b4b4;white-space:nowrap">420</div><div class="a" style="left:279px;width:64.4px;text-align:right;top:122.4px;height:18px;line-height:18px;font-size:14.5px;letter-spacing:.6px;transform:scaleX(.985);transform-origin:100% 50%;color:#b4b4b4;-webkit-text-stroke:.25px #b4b4b4;white-space:nowrap">440</div><svg width="942" height="854" viewBox="41 31 942 854"><path d="M567.2 275.2C590.9 275.2 614.5 275.2 638.2 275.2" fill="none" stroke="#2a9044" stroke-width="1.05"/><path d="M567.2 734.1C590.9 734.1 614.5 734.1 638.2 734.1" fill="none" stroke="#2a9044" stroke-width="1.05"/><path d="M567.2 740.4C590.9 740.4 614.5 740.4 638.2 740.4" fill="none" stroke="#2a9044" stroke-width="1.05"/><path d="M359.1 744.4C381.2 745.9 403.3 749.6 425.4 749.0C449.0 748.3 472.6 740.4 496.3 740.4C519.9 740.4 543.6 748.2 567.2 749.0C590.9 749.7 614.5 744.9 638.2 744.7C661.8 744.5 685.5 747.8 709.1 747.8C780.0 747.7 851.0 745.5 921.9 744.4" fill="none" stroke="#2a9044" stroke-width="1.05"/><path d="M359.1 744.4C381.2 743.9 403.3 742.8 425.4 742.8C449.0 742.9 472.6 745.1 496.3 744.8C519.9 744.5 543.6 741.4 567.2 741.3C590.9 741.1 614.5 743.0 638.2 743.9C661.8 744.8 685.5 746.7 709.1 746.7C780.0 746.9 851.0 745.2 921.9 744.4" fill="none" stroke="#3f9fce" stroke-width="1.05"/><path d="M359.1 744.4C381.2 744.5 403.3 744.7 425.4 744.8C449.0 744.9 472.6 745.2 496.3 744.9C519.9 744.7 543.6 743.4 567.2 743.4C590.9 743.3 614.5 744.5 638.2 744.8C661.8 745.1 685.5 745.2 709.1 745.2C780.0 745.1 851.0 744.7 921.9 744.5" fill="none" stroke="#4a80cc" stroke-width="1.05"/><path d="M359.1 744.4C381.2 748.5 403.3 754.3 425.4 756.8C449.0 759.4 472.6 759.3 496.3 759.5C519.9 759.8 543.6 760.8 567.2 758.3C590.9 755.9 614.5 745.9 638.2 744.7C661.8 743.4 685.5 750.7 709.1 750.7C780.0 750.6 851.0 746.5 921.9 744.4" fill="none" stroke="#ad3033" stroke-width="1.05"/><path d="M359.1 744.4C381.2 744.0 403.3 743.2 425.4 743.1C449.0 743.0 472.6 743.6 496.3 743.7C519.9 743.9 543.6 743.7 567.2 743.7C590.9 743.8 614.5 743.9 638.2 743.9C661.8 743.8 685.5 743.4 709.1 743.5C780.0 743.6 851.0 744.1 921.9 744.4" fill="none" stroke="#259228" stroke-width="1.05"/><rect x="358.4" y="153" width="1.6" height="727.5" fill="#8f8629"/><path d="M567.2 270.4L571.5 274.6L567.2 278.9L563.0 274.6z" fill="#444"/><path d="M638.2 270.4L642.4 274.6L638.2 278.9L633.9 274.6z" fill="#444"/><path d="M359.1 739.5L363.4 743.8L359.1 748.0L354.9 743.8z" fill="#444"/><path d="M921.9 739.5L926.2 743.8L921.9 748.0L917.7 743.8z" fill="#444"/><path d="M425.4 738.0L429.6 742.2L425.4 746.5L421.1 742.2z" fill="#444"/><path d="M425.4 744.1L429.6 748.4L425.4 752.6L421.1 748.4z" fill="#444"/><path d="M425.4 751.9L429.6 756.2L425.4 760.4L421.1 756.2z" fill="#444"/><path d="M496.3 735.5L500.5 739.8L496.3 744.0L492.0 739.8z" fill="#444"/><path d="M496.3 739.3L500.5 743.5L496.3 747.8L492.0 743.5z" fill="#444"/><path d="M496.3 740.3L500.5 744.6L496.3 748.8L492.0 744.6z" fill="#444"/><path d="M496.3 754.7L500.5 758.9L496.3 763.2L492.0 758.9z" fill="#444"/><path d="M567.2 729.3L571.5 733.5L567.2 737.8L563.0 733.5z" fill="#444"/><path d="M567.2 736.2L571.5 740.4L567.2 744.7L563.0 740.4z" fill="#444"/><path d="M567.2 736.7L571.5 740.9L567.2 745.2L563.0 740.9z" fill="#444"/><path d="M567.2 739.2L571.5 743.4L567.2 747.7L563.0 743.4z" fill="#444"/><path d="M567.2 744.1L571.5 748.4L567.2 752.6L563.0 748.4z" fill="#444"/><path d="M567.2 753.5L571.5 757.7L567.2 762.0L563.0 757.7z" fill="#444"/><path d="M638.2 729.3L642.4 733.5L638.2 737.8L633.9 733.5z" fill="#444"/><path d="M638.2 735.5L642.4 739.8L638.2 744.0L633.9 739.8z" fill="#444"/><path d="M638.2 739.0L642.4 743.3L638.2 747.5L633.9 743.3z" fill="#444"/><path d="M638.2 739.9L642.4 744.2L638.2 748.4L633.9 744.2z" fill="#444"/><path d="M709.1 738.6L713.3 742.9L709.1 747.1L704.8 742.9z" fill="#444"/><path d="M709.1 741.9L713.3 746.1L709.1 750.4L704.8 746.1z" fill="#444"/><path d="M709.1 742.9L713.3 747.2L709.1 751.4L704.8 747.2z" fill="#444"/><path d="M709.1 745.8L713.3 750.1L709.1 754.3L704.8 750.1z" fill="#444"/><path d="M567.2 270.4L571.5 274.6L567.2 278.9L563.0 274.6z" fill="none" stroke="#e4a015" stroke-width="1.5"/><path d="M638.2 270.4L642.4 274.6L638.2 278.9L633.9 274.6z" fill="none" stroke="#e4a015" stroke-width="1.5"/><path d="M359.1 739.5L363.4 743.8L359.1 748.0L354.9 743.8z" fill="none" stroke="#e4a015" stroke-width="1.5"/><path d="M921.9 739.5L926.2 743.8L921.9 748.0L917.7 743.8z" fill="none" stroke="#e4a015" stroke-width="1.5"/><path d="M425.4 738.0L429.6 742.2L425.4 746.5L421.1 742.2z" fill="none" stroke="#e4a015" stroke-width="1.5"/><path d="M425.4 744.1L429.6 748.4L425.4 752.6L421.1 748.4z" fill="none" stroke="#e4a015" stroke-width="1.5"/><path d="M425.4 751.9L429.6 756.2L425.4 760.4L421.1 756.2z" fill="none" stroke="#e4a015" stroke-width="1.5"/><path d="M496.3 735.5L500.5 739.8L496.3 744.0L492.0 739.8z" fill="none" stroke="#e4a015" stroke-width="1.5"/><path d="M496.3 739.3L500.5 743.5L496.3 747.8L492.0 743.5z" fill="none" stroke="#e4a015" stroke-width="1.5"/><path d="M496.3 740.3L500.5 744.6L496.3 748.8L492.0 744.6z" fill="none" stroke="#e4a015" stroke-width="1.5"/><path d="M496.3 754.7L500.5 758.9L496.3 763.2L492.0 758.9z" fill="none" stroke="#e4a015" stroke-width="1.5"/><path d="M567.2 729.3L571.5 733.5L567.2 737.8L563.0 733.5z" fill="none" stroke="#e4a015" stroke-width="1.5"/><path d="M567.2 736.2L571.5 740.4L567.2 744.7L563.0 740.4z" fill="none" stroke="#e4a015" stroke-width="1.5"/><path d="M567.2 736.7L571.5 740.9L567.2 745.2L563.0 740.9z" fill="none" stroke="#e4a015" stroke-width="1.5"/><path d="M567.2 739.2L571.5 743.4L567.2 747.7L563.0 743.4z" fill="none" stroke="#e4a015" stroke-width="1.5"/><path d="M567.2 744.1L571.5 748.4L567.2 752.6L563.0 748.4z" fill="none" stroke="#e4a015" stroke-width="1.5"/><path d="M567.2 753.5L571.5 757.7L567.2 762.0L563.0 757.7z" fill="none" stroke="#e4a015" stroke-width="1.5"/><path d="M638.2 729.3L642.4 733.5L638.2 737.8L633.9 733.5z" fill="none" stroke="#e4a015" stroke-width="1.5"/><path d="M638.2 735.5L642.4 739.8L638.2 744.0L633.9 739.8z" fill="none" stroke="#e4a015" stroke-width="1.5"/><path d="M638.2 739.0L642.4 743.3L638.2 747.5L633.9 743.3z" fill="none" stroke="#e4a015" stroke-width="1.5"/><path d="M638.2 739.9L642.4 744.2L638.2 748.4L633.9 744.2z" fill="none" stroke="#e4a015" stroke-width="1.5"/><path d="M709.1 738.6L713.3 742.9L709.1 747.1L704.8 742.9z" fill="none" stroke="#e4a015" stroke-width="1.5"/><path d="M709.1 741.9L713.3 746.1L709.1 750.4L704.8 746.1z" fill="none" stroke="#e4a015" stroke-width="1.5"/><path d="M709.1 742.9L713.3 747.2L709.1 751.4L704.8 747.2z" fill="none" stroke="#e4a015" stroke-width="1.5"/><path d="M709.1 745.8L713.3 750.1L709.1 754.3L704.8 750.1z" fill="none" stroke="#e4a015" stroke-width="1.5"/><path d="M343.9 123.8H374.1V141.7L359 153.3L343.9 141.7z" fill="#ffff00"/><path d="M349.95 126.50H351.35V134.30H353.00V135.30H348.30V134.30H349.95V127.80L348.30 128.40V127.30z" fill="#ffffd8" fill-opacity="0.85"/><path d="M357.85 127.80H359.25V135.60H360.90V136.60H356.20V135.60H357.85V129.10L356.20 129.70V128.60z" fill="#0a0a00" fill-opacity="1"/><path d="M922.6 124H952.7V140.4H935.4L922.6 153.4z" fill="#000"/><text x="926.4" y="135.9" font-family="Liberation Sans,sans-serif" font-size="13.4" letter-spacing=".75" fill="#fff" stroke="#fff" stroke-width=".2">120</text></svg>
<div id="rim"></div>
</div>
</body></html>
